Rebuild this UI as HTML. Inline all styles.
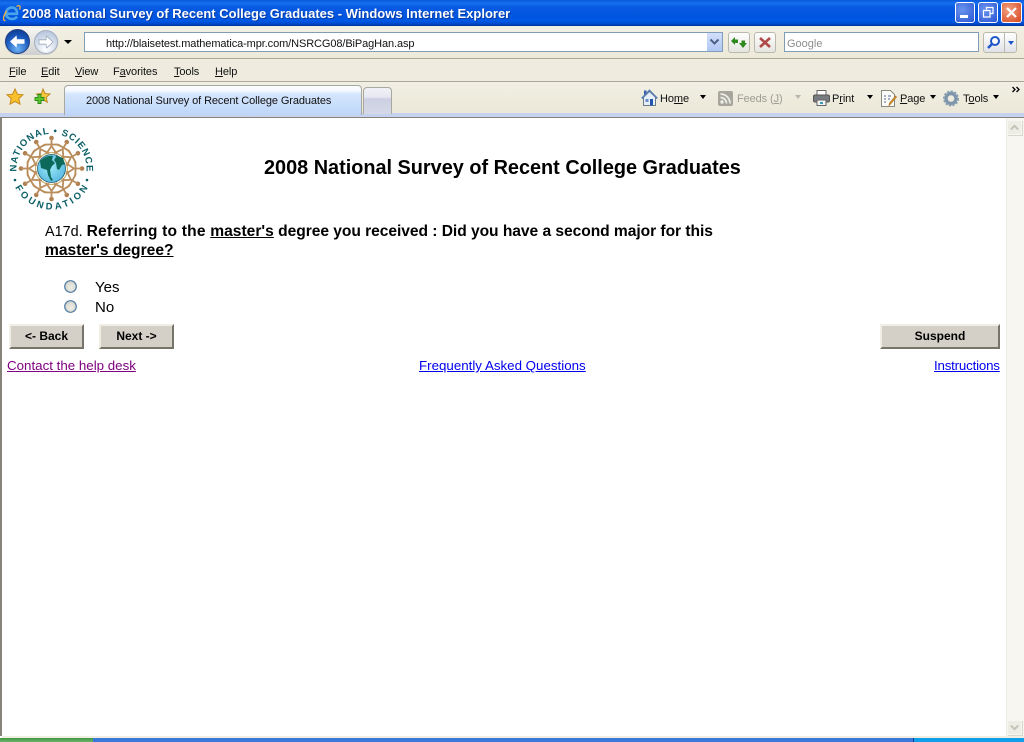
<!DOCTYPE html>
<html><head><meta charset="utf-8"><title>2008 National Survey of Recent College Graduates</title>
<style>
html,body{margin:0;padding:0;width:1024px;height:742px;overflow:hidden;background:#fff}
#r{position:relative;width:1024px;height:742px;overflow:hidden;font-family:"Liberation Sans",Arial,sans-serif}
.a{position:absolute}
.t{position:absolute;white-space:nowrap;font-size:11px;line-height:14px;color:#111;letter-spacing:-.1px}
.c{position:absolute;white-space:nowrap;color:#000;font-size:15.6px;line-height:19px}
.btn{position:absolute;top:324px;height:25px;box-sizing:border-box;background:#d4d0c8;border:2px solid;border-color:#f1efe4 #77746a #77746a #f1efe4;font:bold 12px/21px "Liberation Sans",sans-serif;text-align:center;color:#000}
.ln{position:absolute;white-space:nowrap;font-size:13.33px;line-height:17px}
.ar{position:absolute;width:0;height:0;border-left:3px solid transparent;border-right:3px solid transparent;border-top:4px solid #000}
svg{position:absolute;overflow:visible}
</style></head><body><div id="r">
<!-- title bar -->
<div class="a" style="left:0;top:0;width:1024px;height:26px;background:linear-gradient(#0a58dc 0,#1470ee 3px,#0a5ae2 7px,#0055e0 17px,#0058e6 21px,#0048c8 24px,#00349c 26px)"></div>
<svg style="left:3px;top:4px" width="18" height="18" viewBox="0 0 18 18"><path d="M4 9.800H14C14.500 5.500 11.500 3.500 9 3.500C5.500 3.500 3 6 3 9.500C3 13 6 15 9 15C11 15 13 14.200 14 12.500" fill="none" stroke="#4aa4ea" stroke-width="2.600"/><path d="M13.500 2.500C16 .8 18.300 1.500 16.500 5.500M3.500 7C0 12.500-.5 17 2.500 16.500" fill="none" stroke="#efb23a" stroke-width="1.300"/></svg>
<div class="t" style="left:22px;top:6px;color:#fff;font-weight:bold;font-size:13px;line-height:16px;letter-spacing:0;text-shadow:1px 1px 0 #0a3aa0">2008 National Survey of Recent College Graduates - Windows Internet Explorer</div>
<div class="a" style="left:955px;top:2px;width:20px;height:21px;box-sizing:border-box;border:1px solid #fff;border-radius:3px;background:radial-gradient(circle at 35% 35%,#6a94ee,#2a55d4)"></div>
<div class="a" style="left:960px;top:15px;width:8px;height:3px;background:#fff"></div>
<div class="a" style="left:978px;top:2px;width:20px;height:21px;box-sizing:border-box;border:1px solid #fff;border-radius:3px;background:radial-gradient(circle at 35% 35%,#6a94ee,#2a55d4)"></div>
<svg style="left:983px;top:7px" width="11" height="11"><path d="M3.500 2.500V.5h6.500v6H7.500M.5 3.500h6.500v6.500H.5z" fill="none" stroke="#fff" stroke-width="1.200"/></svg>
<div class="a" style="left:1001px;top:2px;width:21px;height:21px;box-sizing:border-box;border:1px solid #fff;border-radius:3px;background:radial-gradient(circle at 35% 35%,#f0a080,#d8451e)"></div>
<svg style="left:1006px;top:7px" width="11" height="11"><path d="M1 1l9 9M10 1l-9 9" stroke="#fff" stroke-width="2.200"/></svg>

<!-- address toolbar -->
<div class="a" style="left:0;top:26px;width:1024px;height:33px;background:linear-gradient(#f2f0e4,#ece9d8)"></div>
<div class="a" style="left:0;top:58px;width:1024px;height:1px;background:#aca899"></div>
<div class="a" style="left:4px;top:28px;width:55px;height:27px;border-radius:14px;background:linear-gradient(#f6f6f4,#cfcfcf)"></div>
<svg style="left:5px;top:29px" width="26" height="26" viewBox="0 0 26 26"><defs><radialGradient id="bg" cx=".5" cy=".8" r=".8"><stop offset="0" stop-color="#6fb4f4"/><stop offset=".6" stop-color="#1c5cc0"/><stop offset="1" stop-color="#0d3c94"/></radialGradient></defs><circle cx="12.500" cy="12.500" r="12" fill="url(#bg)" stroke="#25407e"/><path d="M5 12.500l6.500-6 .5 3.800h7.500v4.400H12l-.5 3.800z" fill="#fff"/></svg>
<svg style="left:34px;top:30px" width="24" height="24" viewBox="0 0 24 24"><defs><radialGradient id="fg" cx=".5" cy=".8" r=".8"><stop offset="0" stop-color="#fff"/><stop offset="1" stop-color="#b4c4dc"/></radialGradient></defs><circle cx="12" cy="12" r="11.500" fill="url(#fg)" stroke="#a4aebc"/><path d="M19 12l-6.500-6-.5 3.800H5v4.400h7l.5 3.800z" fill="#fff" stroke="#9aa8bc" stroke-width=".8"/></svg>
<div class="ar" style="left:64px;top:40px;border-left-width:4px;border-right-width:4px"></div>
<div class="a" style="left:84px;top:32px;width:639px;height:20px;box-sizing:border-box;background:#fff;border:1px solid #7f9db9"></div>
<div class="t" style="left:106px;top:37px">http://blaisetest.mathematica-mpr.com/NSRCG08/BiPagHan.asp</div>
<div class="a" style="left:707px;top:33px;width:15px;height:18px;background:linear-gradient(#d3dffa,#b0c6f4)"></div>
<svg style="left:709px;top:38px" width="11" height="8"><path d="M1.500 1.500l4 4 4-4" fill="none" stroke="#4d6185" stroke-width="2"/></svg>
<div class="a" style="left:728px;top:32px;width:22px;height:21px;box-sizing:border-box;border:1px solid #bbb9ae;border-radius:3px;background:linear-gradient(#fff,#e4e4e0)"></div>
<svg style="left:731px;top:36px" width="16" height="13"><path d="M0 5l4-4v2.500h3V7H4v2zM16 7l-4 5-4-5h2.500V4.500H14V7z" fill="#2e8a20"/></svg>
<div class="a" style="left:754px;top:32px;width:22px;height:21px;box-sizing:border-box;border:1px solid #bbb9ae;border-radius:3px;background:linear-gradient(#fff,#e4e4e0)"></div>
<svg style="left:759px;top:37px" width="12" height="11"><path d="M1 1l10 9M11 1L1 10" stroke="#b04a4a" stroke-width="2.600"/></svg>
<div class="a" style="left:784px;top:32px;width:195px;height:20px;box-sizing:border-box;background:#fff;border:1px solid #7f9db9"></div>
<div class="t" style="left:787px;top:37px;color:#8d8d8d;letter-spacing:0">Google</div>
<div class="a" style="left:983px;top:32px;width:34px;height:21px;box-sizing:border-box;border:1px solid #bbb9ae;border-radius:3px;background:linear-gradient(#fff,#e0e2e8)"></div>
<div class="a" style="left:1004px;top:33px;width:1px;height:19px;background:#bbb9ae"></div>
<svg style="left:986px;top:35px" width="15" height="15"><circle cx="9" cy="6" r="4" fill="#fff" stroke="#1f56c8" stroke-width="2"/><path d="M6 9l-4 4" stroke="#1f56c8" stroke-width="2.500"/></svg>
<div class="ar" style="left:1008px;top:41px;border-top-color:#1f56c8"></div>

<!-- menu -->
<div class="a" style="left:0;top:59px;width:1024px;height:22px;background:#efecdf"></div>
<div class="a" style="left:0;top:81px;width:1024px;height:1px;background:#aca899"></div>
<div class="t" style="left:9px;top:65px"><u>F</u>ile</div>
<div class="t" style="left:41px;top:65px"><u>E</u>dit</div>
<div class="t" style="left:75px;top:65px"><u>V</u>iew</div>
<div class="t" style="left:113px;top:65px">F<u>a</u>vorites</div>
<div class="t" style="left:174px;top:65px"><u>T</u>ools</div>
<div class="t" style="left:215px;top:65px"><u>H</u>elp</div>

<!-- tab row -->
<div class="a" style="left:0;top:82px;width:1024px;height:32px;background:linear-gradient(#f1efe4,#ebe8d8)"></div>
<div class="a" style="left:0;top:113px;width:1024px;height:4px;background:#c4d2f0"></div>
<div class="a" style="left:0;top:117px;width:1024px;height:1px;background:#86837a"></div>
<svg style="left:6px;top:88px" width="18" height="18" viewBox="0 0 18 18"><path d="M9 1l2.400 5.200 5.600.6-4.200 3.800 1.200 5.600L9 13.400l-5 2.800 1.200-5.600L1 6.800l5.600-.6z" fill="#f7c02c" stroke="#c88a1e"/></svg>
<svg style="left:33px;top:88px" width="18" height="18" viewBox="0 0 18 18"><path d="M10 1l2 4.500 5 .5-3.700 3.300 1 5-4.300-2.500-4 2.300 1-4.800L3.500 6l5-.5z" fill="#f5c840" stroke="#c08a20"/><path d="M5 6.500h3v3h3v3H8v3H5v-3H2v-3h3z" fill="#5cc62e" stroke="#2a8a18" stroke-width=".9"/></svg>
<div class="a" style="left:64px;top:85px;width:298px;height:30px;box-sizing:border-box;border:1px solid #a8a89e;border-bottom:0;border-radius:4px 4px 0 0;background:linear-gradient(#fafcff 0,#f4f8ff 5px,#d5e6fd 8px,#bed6fa 100%)"></div>
<div class="t" style="left:86px;top:94px">2008 National Survey of Recent College Graduates</div>
<div class="a" style="left:363px;top:87px;width:29px;height:27px;box-sizing:border-box;border:1px solid #a8a89e;border-bottom:0;border-radius:4px 4px 0 0;background:linear-gradient(#f0f0f6 0,#e8e8f2 9px,#ccd0e2 11px,#d6d8e8 100%)"></div>

<svg style="left:641px;top:89px" width="17" height="18" viewBox="0 0 17 18"><rect x="3" y="1.500" width="2.500" height="5" fill="#3a5ea8"/><path d="M2.500 8v8.500h12V8L8.500 2.500z" fill="#e6eef6" stroke="#6a7a8a"/><path d="M.8 9.500L8.500 1.500l7.700 8" fill="none" stroke="#5a7cae" stroke-width="1.800"/><rect x="9" y="10" width="3" height="6.500" fill="#2455b0"/><rect x="4.500" y="10" width="3" height="3" fill="#6a8fc8"/></svg>
<div class="t" style="left:660px;top:92px">Ho<u>m</u>e</div>
<div class="ar" style="left:700px;top:95px"></div>
<svg style="left:718px;top:91px" width="15" height="15"><rect width="15" height="15" rx="2" fill="#a8a69c"/><circle cx="4" cy="11" r="1.700" fill="#eeeee8"/><path d="M2.500 6.500a6 6 0 0 1 6 6M2.500 3a9.500 9.500 0 0 1 9.500 9.500" fill="none" stroke="#eeeee8" stroke-width="1.700"/></svg>
<div class="t" style="left:737px;top:92px;color:#9e9d93">Feeds (<u>J</u>)</div>
<div class="ar" style="left:795px;top:95px;border-top-color:#b8b7ac"></div>
<svg style="left:813px;top:90px" width="17" height="16"><rect x="4" y="0.500" width="9" height="5" fill="#fff" stroke="#666"/><rect x=".5" y="5" width="16" height="7" rx="1.500" fill="#777c80" stroke="#555"/><rect x="4" y="10" width="9" height="5.500" fill="#f4f4f4" stroke="#666"/><rect x="7" y="12" width="3" height="2" fill="#3a9ab8"/></svg>
<div class="t" style="left:832px;top:92px">P<u>r</u>int</div>
<div class="ar" style="left:867px;top:95px"></div>
<svg style="left:881px;top:90px" width="17" height="17"><path d="M.5.500h9l4 4v12H.5z" fill="#fbfbf6" stroke="#8a8a84"/><path d="M3 6h2M7 6h3M3 9h2M7 9h2M3 12h2" stroke="#4a66a0"/><path d="M15.500 7l-6 7-1.500 1.500.5-2.500 6-7z" fill="#e8a838" stroke="#a86a18" stroke-width=".7"/></svg>
<div class="t" style="left:900px;top:92px"><u>P</u>age</div>
<div class="ar" style="left:930px;top:95px"></div>
<svg style="left:943px;top:90px" width="16" height="17" viewBox="0 0 16 17"><circle cx="8" cy="8.500" r="5" fill="none" stroke="#7e96ac" stroke-width="3.400"/><circle cx="8" cy="8.500" r="7" fill="none" stroke="#8a9eb2" stroke-width="2" stroke-dasharray="2.200 1.400"/></svg>
<div class="t" style="left:963px;top:92px">T<u>o</u>ols</div>
<div class="ar" style="left:993px;top:95px"></div>
<svg style="left:1012px;top:86px" width="9" height="8"><path d="M.5 1l2.500 2.500L.5 6M4.500 1L7 3.500 4.500 6" fill="none" stroke="#000" stroke-width="1.300"/></svg>

<!-- frame -->
<div class="a" style="left:0;top:118px;width:2px;height:618px;background:#86837a"></div>
<div class="a" style="left:2px;top:736px;width:1022px;height:2px;background:#f1efe2"></div>
<div class="a" style="left:1006px;top:118px;width:18px;height:618px;background:#f7f6f0;border-left:1px solid #ecebe3;box-sizing:border-box"></div>
<div class="a" style="left:1007px;top:120px;width:15px;height:15px;box-sizing:border-box;background:#eeede5;border:1px solid #f7f6f0;box-shadow:1px 1px 0 #d8d7cc"></div>
<svg style="left:1010px;top:124px" width="9" height="7"><path d="M.8 5.500l3.700-3.700 3.700 3.700" fill="none" stroke="#c5c4b9" stroke-width="2"/></svg>
<div class="a" style="left:1007px;top:720px;width:15px;height:15px;box-sizing:border-box;background:#eeede5;border:1px solid #f7f6f0;box-shadow:1px 1px 0 #d8d7cc"></div>
<svg style="left:1010px;top:724px" width="9" height="7"><path d="M.8 1.500l3.700 3.700 3.700-3.700" fill="none" stroke="#c5c4b9" stroke-width="2"/></svg>

<!-- taskbar -->
<div class="a" style="left:0;top:738px;width:1024px;height:4px;background:#3a78dc"></div>
<div class="a" style="left:0;top:738px;width:93px;height:4px;background:linear-gradient(#3d9a3d,#6eb06e)"></div>
<div class="a" style="left:913px;top:738px;width:111px;height:4px;background:#0f9fea"></div>
<div class="a" style="left:913px;top:738px;width:1px;height:4px;background:#0c3c90"></div>

<!-- logo: center (42.5,43.5) in local coords -->
<svg style="left:9px;top:125px" width="86" height="86" viewBox="0 0 86 86">
<defs><path id="top" d="M7.600 46.500A35 35 0 1 1 77.400 46.500"/><path id="bot" d="M5.650 61.500A41 41 0 0 0 79.350 61.500"/>
<radialGradient id="gl" cx=".45" cy=".45" r=".6"><stop offset="0" stop-color="#9be8f6"/><stop offset="1" stop-color="#58b8e2"/></radialGradient></defs>
<g fill="none" stroke="#cdb070" stroke-width="1.200"><circle cx="42.500" cy="43.500" r="16"/><circle cx="42.500" cy="43.500" r="24"/></g>
<g stroke="#b98d5c" stroke-width="1.800" fill="none">
<g id="s"><circle cx="42.500" cy="13" r="2.300" fill="#b07f52" stroke="none"/><path d="M42.500 14V21M36.500 19.500L48.500 19.500M42.500 21L37.500 28.500M42.500 21L47.500 28.500" stroke-linecap="round"/></g>
<use href="#s" transform="rotate(30 42.500 43.500)"/><use href="#s" transform="rotate(60 42.500 43.500)"/><use href="#s" transform="rotate(90 42.500 43.500)"/><use href="#s" transform="rotate(120 42.500 43.500)"/><use href="#s" transform="rotate(150 42.500 43.500)"/><use href="#s" transform="rotate(180 42.500 43.500)"/><use href="#s" transform="rotate(210 42.500 43.500)"/><use href="#s" transform="rotate(240 42.500 43.500)"/><use href="#s" transform="rotate(270 42.500 43.500)"/><use href="#s" transform="rotate(300 42.500 43.500)"/><use href="#s" transform="rotate(330 42.500 43.500)"/>
</g>
<circle cx="42.500" cy="43.500" r="14" fill="url(#gl)" stroke="#1a5a66" stroke-width=".8"/>
<path d="M31 36c4-4 9-6 13-5l-1 4 3 3-3 3-2 4 1 7 2 3-2 1-3-6-1-5-6-2zM47 31l7 2 2 6-3 1-3 5-2-1-1-6-2-3 2-3z" fill="#0d6a5a"/>
<text font-family="Liberation Sans,sans-serif" font-weight="bold" font-size="9.500" fill="#0b5f66"><textPath href="#top" startOffset="0" textLength="115" lengthAdjust="spacing">NATIONAL • SCIENCE</textPath></text>
<text font-family="Liberation Sans,sans-serif" font-weight="bold" font-size="9.500" fill="#0b5f66"><textPath href="#bot" startOffset="1" textLength="89" lengthAdjust="spacing">FOUNDATION</textPath></text>
<circle cx="6" cy="55" r="1.300" fill="#0b5f66"/><circle cx="78" cy="55" r="1.300" fill="#0b5f66"/>
</svg>

<!-- content -->
<div class="c" style="left:264px;top:156px;font-size:19.870px;line-height:24px;font-weight:bold">2008 National Survey of Recent College Graduates</div>
<div class="c" style="left:45px;top:222px"><span style="font-size:14.400px">A17d.</span><span style="display:inline-block;width:4px"></span><b><span style="letter-spacing:.19px">Referring to the </span><u>master's</u> <span style="letter-spacing:-.05px">degree you received : Did you have a second major for this</span></b></div>
<div class="c" style="left:45px;top:241px"><b><u>master's degree?</u></b></div>
<svg style="left:63px;top:279px" width="15" height="35"><defs><radialGradient id="rd" cx=".55" cy=".6" r=".7"><stop offset="0" stop-color="#eeeee8"/><stop offset="1" stop-color="#d0cec4"/></radialGradient></defs><circle cx="7.500" cy="7.500" r="5.800" fill="url(#rd)" stroke="#4f7da4" stroke-width="1.200"/><circle cx="7.500" cy="27.500" r="5.800" fill="url(#rd)" stroke="#4f7da4" stroke-width="1.200"/></svg>
<div class="c" style="left:95px;top:278px;font-size:15px">Yes</div>
<div class="c" style="left:95px;top:298px;font-size:15px">No</div>
<div class="btn" style="left:9px;width:75px">&lt;- Back</div>
<div class="btn" style="left:99px;width:75px">Next -&gt;</div>
<div class="btn" style="left:880px;width:120px">Suspend</div>
<div class="ln" style="left:7px;top:357px;color:#800080;text-decoration:underline">Contact the help desk</div>
<div class="ln" style="left:419px;top:357px;color:#0000ee;text-decoration:underline">Frequently Asked Questions</div>
<div class="ln" style="left:934px;top:357px;color:#0000ee;text-decoration:underline;letter-spacing:-.2px">Instructions</div>
</div></body></html>
